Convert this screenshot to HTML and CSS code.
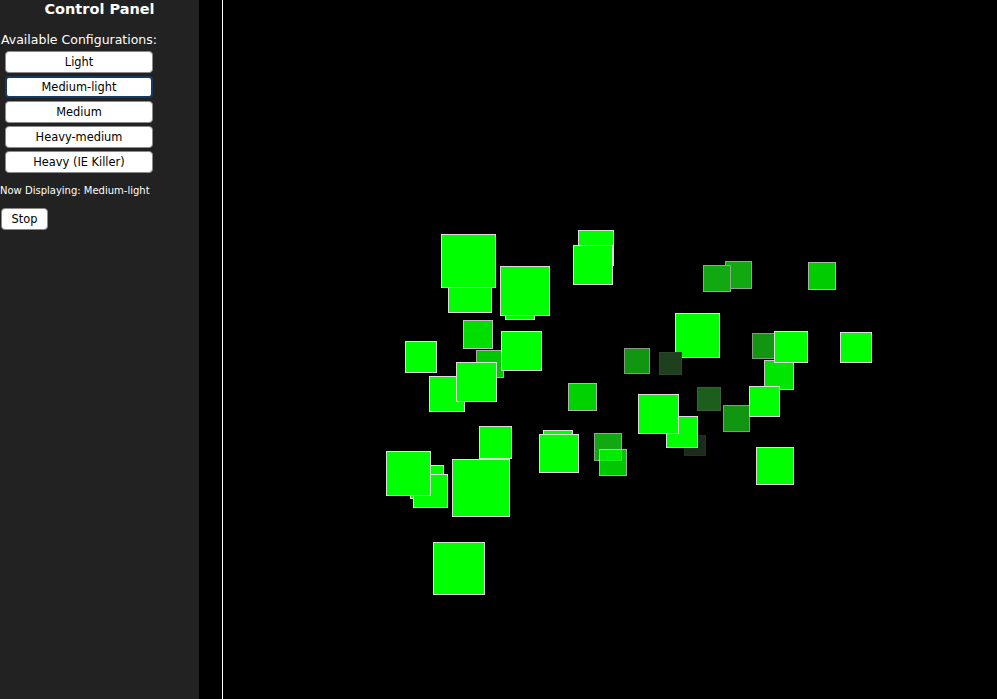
FILE: index.html
```html
<!DOCTYPE html>
<html>
<head>
<meta charset="utf-8">
<title>Control Panel</title>
<link rel="stylesheet" href="styles.css">
</head>
<body>
<div class="page">
  <aside class="panel">
    <h1 class="title">Control Panel</h1>
    <div class="configs">
      <div class="label">Available Configurations:</div>
      <button class="btn">Light</button>
      <button class="btn active">Medium-light</button>
      <button class="btn">Medium</button>
      <button class="btn">Heavy-medium</button>
      <button class="btn">Heavy (IE Killer)</button>
    </div>
    <div class="status">Now Displaying: Medium-light</div>
    <button class="btn stop">Stop</button>
  </aside>
  <main class="canvas">
    <div class="sq" style="left:225px;top:269px;width:44px;height:44px"></div>
    <div class="sq" style="left:218px;top:234px;width:55px;height:54px"></div>
    <div class="sq" style="left:282px;top:290px;width:30px;height:30px"></div>
    <div class="sq" style="left:277px;top:266px;width:50px;height:50px"></div>
    <div class="sq" style="left:355px;top:230px;width:36px;height:36px"></div>
    <div class="sq" style="left:350px;top:245px;width:40px;height:40px"></div>
    <div class="sq" style="left:240px;top:320px;width:30px;height:29px;opacity:0.87"></div>
    <div class="sq" style="left:182px;top:341px;width:32px;height:32px"></div>
    <div class="sq" style="left:253px;top:350px;width:28px;height:28px;opacity:0.78"></div>
    <div class="sq" style="left:278px;top:331px;width:41px;height:40px"></div>
    <div class="sq" style="left:206px;top:376px;width:36px;height:36px"></div>
    <div class="sq" style="left:233px;top:362px;width:41px;height:40px"></div>
    <div class="sq" style="left:345px;top:383px;width:29px;height:28px;opacity:0.82"></div>
    <div class="sq t65" style="left:502px;top:261px;width:27px;height:28px"></div>
    <div class="sq t65" style="left:480px;top:265px;width:28px;height:27px"></div>
    <div class="sq" style="left:585px;top:262px;width:28px;height:28px;opacity:0.8"></div>
    <div class="sq" style="left:452px;top:313px;width:45px;height:45px"></div>
    <div class="sq t60" style="left:401px;top:348px;width:26px;height:26px"></div>
    <div class="sq t22" style="left:436px;top:352px;width:23px;height:23px"></div>
    <div class="sq t60" style="left:529px;top:333px;width:26px;height:26px"></div>
    <div class="sq" style="left:541px;top:360px;width:30px;height:30px;opacity:0.9"></div>
    <div class="sq" style="left:551px;top:331px;width:34px;height:32px"></div>
    <div class="sq" style="left:617px;top:332px;width:32px;height:31px"></div>
    <div class="sq t60" style="left:500px;top:405px;width:27px;height:27px"></div>
    <div class="sq" style="left:526px;top:386px;width:31px;height:31px"></div>
    <div class="sq t40" style="left:474px;top:387px;width:24px;height:24px"></div>
    <div class="sq t15" style="left:461px;top:435px;width:22px;height:21px"></div>
    <div class="sq" style="left:443px;top:416px;width:32px;height:32px"></div>
    <div class="sq" style="left:415px;top:394px;width:41px;height:40px"></div>
    <div class="sq" style="left:533px;top:447px;width:38px;height:38px"></div>
    <div class="sq t65" style="left:371px;top:433px;width:28px;height:28px"></div>
    <div class="sq" style="left:376px;top:449px;width:28px;height:27px;opacity:0.78"></div>
    <div class="sq" style="left:320px;top:430px;width:30px;height:30px"></div>
    <div class="sq" style="left:316px;top:434px;width:40px;height:39px"></div>
    <div class="sq" style="left:256px;top:426px;width:33px;height:33px"></div>
    <div class="sq" style="left:229px;top:459px;width:58px;height:58px"></div>
    <div class="sq" style="left:187px;top:465px;width:34px;height:34px"></div>
    <div class="sq" style="left:190px;top:474px;width:35px;height:34px"></div>
    <div class="sq" style="left:163px;top:451px;width:45px;height:45px"></div>
    <div class="sq" style="left:210px;top:542px;width:52px;height:53px"></div>
  </main>
</div>
</body>
</html>
```

FILE: styles.css
```css
html, body {
  margin: 0;
  padding: 0;
  background: #000;
  overflow: hidden;
}

.page {
  display: flex;
  gap: 23px;
  width: 997px;
  height: 699px;
  font-family: "DejaVu Sans", Verdana, sans-serif;
}

.panel {
  width: 199px;
  height: 699px;
  flex: none;
  background: #222222;
  color: #ffffff;
  display: flex;
  flex-direction: column;
  align-items: flex-start;
}

.title {
  margin: 0;
  align-self: stretch;
  text-align: center;
  font-size: 14.5px;
  font-weight: bold;
  line-height: 18px;
}

.configs {
  margin-top: 14px;
  width: 158px;
  display: flex;
  flex-direction: column;
  align-items: center;
  gap: 3px;
}

.label {
  font-size: 12.5px;
  line-height: 16px;
  white-space: nowrap;
  text-align: center;
}

.btn {
  box-sizing: border-box;
  width: 148px;
  height: 22px;
  padding: 0;
  margin: 0;
  background: #ffffff;
  color: #000000;
  border: 1px solid #8a8a8a;
  border-radius: 4px;
  font-family: "DejaVu Sans", Verdana, sans-serif;
  font-size: 11.4px;
  line-height: 20px;
  text-align: center;
}

.btn.active {
  border: 2px solid #163b60;
  line-height: 18px;
}

.status {
  margin-top: 12px;
  font-size: 10px;
  line-height: 12px;
  white-space: nowrap;
}

.btn.stop {
  width: 47px;
  margin-top: 11px;
  margin-left: 1px;
}

.canvas {
  position: relative;
  flex: 1;
  height: 699px;
  border-left: 1px solid #ffffff;
  background: #000000;
  overflow: hidden;
}

.sq {
  position: absolute;
  box-sizing: border-box;
  background: #00ff00;
  border: 1px solid #dcdcdc;
}

.sq.t65 {
  background: #11a811;
  border-color: #8aa88a;
}

.sq.t60 {
  background: #129612;
  border-color: #7f9a7f;
}

.sq.t40 {
  background: #1c5e1c;
  border-color: #3d5e3d;
}

.sq.t22 {
  background: #1f401f;
  border-color: #2d452d;
}

.sq.t15 {
  background: #1c2b1c;
  border-color: #253025;
}
```
